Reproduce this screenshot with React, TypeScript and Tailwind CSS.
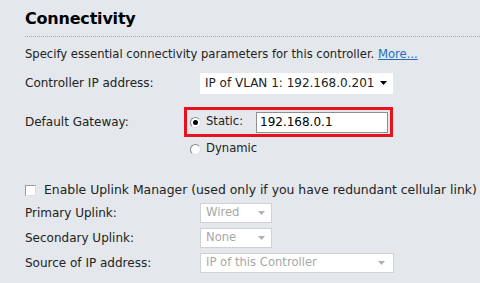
import React from "react";

const font = { fontFamily: '"DejaVu Sans", Verdana, sans-serif' };

function Radio({ checked }: { checked?: boolean }) {
  return (
    <span className="relative inline-flex w-[11px] h-[11px] rounded-full border border-t-[#888] border-l-[#888] border-r-[#ddd] border-b-[#ddd] bg-white items-center justify-center">
      {checked && <span className="w-[5px] h-[5px] rounded-full bg-black" />}
    </span>
  );
}

function Caret({ light }: { light?: boolean }) {
  return (
    <svg width="7" height="4" viewBox="0 0 7 4" className="shrink-0">
      <path d="M0 0 L7 0 L3.5 4 Z" fill={light ? "#b0b0b0" : "#000"} />
    </svg>
  );
}

export default function App() {
  return (
    <div
      className="w-[480px] h-[283px] overflow-hidden bg-[#e4e8ec] text-[#222] text-[12px] pl-[25px]"
      style={font}
    >
      <div className="pt-[8px] text-[16px] tracking-[-0.2px] font-bold leading-[22px] text-black">Connectivity</div>
      <div className="mt-[6px] border-b border-dotted border-[#a9acae]" />
      <div className="mt-[10px] leading-[14px] text-[11.6px]">
        Specify essential connectivity parameters for this controller.{" "}
        <span className="text-[#1f6fbf] underline">More...</span>
      </div>
      <div className="mt-[11px] flex items-center h-[22px]">
        <div className="w-[175px]">Controller IP address:</div>
        <div className="w-[193px] h-[21px] bg-white flex items-center pl-[5px] pr-[6px] text-[12px]">
          <span className="whitespace-nowrap">IP of VLAN 1: 192.168.0.201</span>
          <span className="ml-auto flex"><Caret /></span>
        </div>
      </div>
      <div className="mt-[13px] flex items-center">
        <div className="w-[159px]">Default Gateway:</div>
        <div className="w-[209px] h-[30px] border-[3px] border-[#e8121f] flex items-center pl-[3px]">
          <Radio checked />
          <span className="ml-[5px] w-[50px] text-[11.6px]">Static:</span>
          <div className="w-[132px] h-[21px] bg-white border border-[#8e8f8f] flex items-center pl-[3px] text-[12px] text-black">
            192.168.0.1
          </div>
        </div>
      </div>
      <div className="mt-[4px] flex items-center h-[16px] pl-[165px] text-[11.6px]">
        <Radio />
        <span className="ml-[5px]">Dynamic</span>
      </div>
      <div className="mt-[25px] flex items-center h-[16px]">
        <span className="w-[11px] h-[11px] border border-t-[#999] border-l-[#999] border-r-[#ddd] border-b-[#ddd] bg-white" />
        <span className="ml-[8px] text-[12.4px]">Enable Uplink Manager (used only if you have redundant cellular link)</span>
      </div>
      <div className="mt-[5px] flex items-center h-[20px]">
        <div className="w-[175px]">Primary Uplink:</div>
        <div className="w-[72px] h-[20px] bg-white border border-[#cfd2d4] flex items-center justify-between pl-[5px] pr-[6px] text-[#a8a8a8] text-[11.6px]">
          <span>Wired</span>
          <Caret light />
        </div>
      </div>
      <div className="mt-[5px] flex items-center h-[20px]">
        <div className="w-[175px]">Secondary Uplink:</div>
        <div className="w-[72px] h-[20px] bg-white border border-[#cfd2d4] flex items-center justify-between pl-[5px] pr-[6px] text-[#a8a8a8] text-[11.6px]">
          <span>None</span>
          <Caret light />
        </div>
      </div>
      <div className="mt-[5px] flex items-center h-[20px]">
        <div className="w-[175px]">Source of IP address:</div>
        <div className="w-[194px] h-[20px] bg-white border border-[#cfd2d4] flex items-center justify-between pl-[5px] pr-[8px] text-[#a8a8a8] text-[11.6px]">
          <span>IP of this Controller</span>
          <Caret light />
        </div>
      </div>
    </div>
  );
}
